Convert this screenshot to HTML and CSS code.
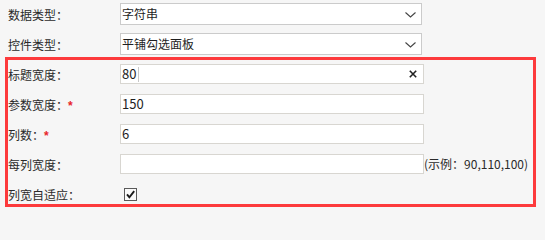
FILE: index.html
```html
<!DOCTYPE html>
<html lang="zh-CN">
<head>
<meta charset="utf-8">
<title>控件属性</title>
<link rel="stylesheet" href="styles.css">
</head>
<body>
<div class="form">
  <div class="row first">
    <div class="label">数据类型<span class="colon">：</span></div>
    <div class="select">
      <span class="value">字符串</span>
      <svg class="chev" width="11" height="6" viewBox="0 0 11 6"><polyline points="0.5,0.5 5.5,5 10.5,0.5" fill="none" stroke="#444" stroke-width="1.1"/></svg>
    </div>
  </div>
  <div class="row">
    <div class="label">控件类型<span class="colon">：</span></div>
    <div class="select">
      <span class="value">平铺勾选面板</span>
      <svg class="chev" width="11" height="6" viewBox="0 0 11 6"><polyline points="0.5,0.5 5.5,5 10.5,0.5" fill="none" stroke="#444" stroke-width="1.1"/></svg>
    </div>
  </div>
  <div class="group">
    <div class="row">
      <div class="label">标题宽度<span class="colon">：</span></div>
      <div class="field">
        <span class="value">80</span><span class="caret"></span>
        <svg class="clear" width="8" height="8" viewBox="0 0 8 8"><path d="M0.8 0.8 L7.2 7.2 M7.2 0.8 L0.8 7.2" stroke="#222" stroke-width="1.6"/></svg>
      </div>
    </div>
    <div class="row">
      <div class="label">参数宽度<span class="colon">：</span><span class="req">*</span></div>
      <div class="field"><span class="value">150</span></div>
    </div>
    <div class="row">
      <div class="label">列数<span class="colon">：</span><span class="req">*</span></div>
      <div class="field"><span class="value">6</span></div>
    </div>
    <div class="row">
      <div class="label">每列宽度<span class="colon">：</span></div>
      <div class="field"></div>
      <span class="hint">(示例<span class="colon">：</span>90,110,100)</span>
    </div>
    <div class="row last">
      <div class="label">列宽自适应<span class="colon">：</span></div>
      <svg class="check" width="13" height="13" viewBox="0 0 13 13"><rect x="0.5" y="0.5" width="12" height="12" fill="#fafafa" stroke="#5a5a5a"/><path d="M3 6.3 L5.4 9.3 L10.2 3.2" fill="none" stroke="#1a1a1a" stroke-width="1.9"/></svg>
    </div>
  </div>
</div>
</body>
</html>
```
FILE: styles.css
```css
html, body {
  margin: 0;
  padding: 0;
  background: #f6f6f6;
}
body {
  font-family: "Noto Sans CJK SC", "Liberation Sans", sans-serif;
  font-size: 12px;
  color: #2a2a2a;
  width: 545px;
  height: 214px;
  overflow: hidden;
}
.form {
  padding-left: 8px;
  display: flex;
  flex-direction: column;
  gap: 2px;
}
.group {
  width: 525px;
  outline: 3px solid #fd3a3c;
  display: flex;
  flex-direction: column;
  gap: 2px;
  height: 144px;
  box-sizing: border-box;
}
.row {
  height: 28px;
  display: flex;
  align-items: center;
}
.row.last {
  height: 24px;
  padding-top: 4px;
  box-sizing: border-box;
}
.label {
  width: 112px;
  flex: none;
  line-height: 16px;
  position: relative;
  top: 1px;
}
.colon {
  font-family: "Noto Sans CJK TC", "Noto Sans CJK SC", sans-serif;
}
.req {
  color: #e8242a;
  font-family: "Liberation Sans", sans-serif;
  font-weight: bold;
  font-size: 12px;
}
.select {
  width: 302px;
  height: 22px;
  box-sizing: border-box;
  border: 1px solid #cbcbcb;
  background: #fff;
  display: flex;
  align-items: center;
  padding: 0 5px 0 1px;
  color: #1e1e1e;
}
.field {
  width: 304px;
  height: 20px;
  box-sizing: border-box;
  border: 1px solid #d8d6d1;
  background: #fff;
  display: flex;
  align-items: center;
  padding: 0 6px 0 1px;
  color: #1e1e1e;
}
.value {
  flex: none;
  line-height: 16px;
}
.field .value {
  font-size: 13px;
}
.select .value {
  flex: 1;
}
.chev {
  flex: none;
  margin-top: 1px;
}
.caret {
  width: 1px;
  height: 15px;
  background: #c8c8c8;
  margin-left: 2px;
}
.clear {
  margin-left: auto;
  flex: none;
}
.hint {
  line-height: 16px;
}
.check {
  margin-left: 4px;
  flex: none;
}
```
